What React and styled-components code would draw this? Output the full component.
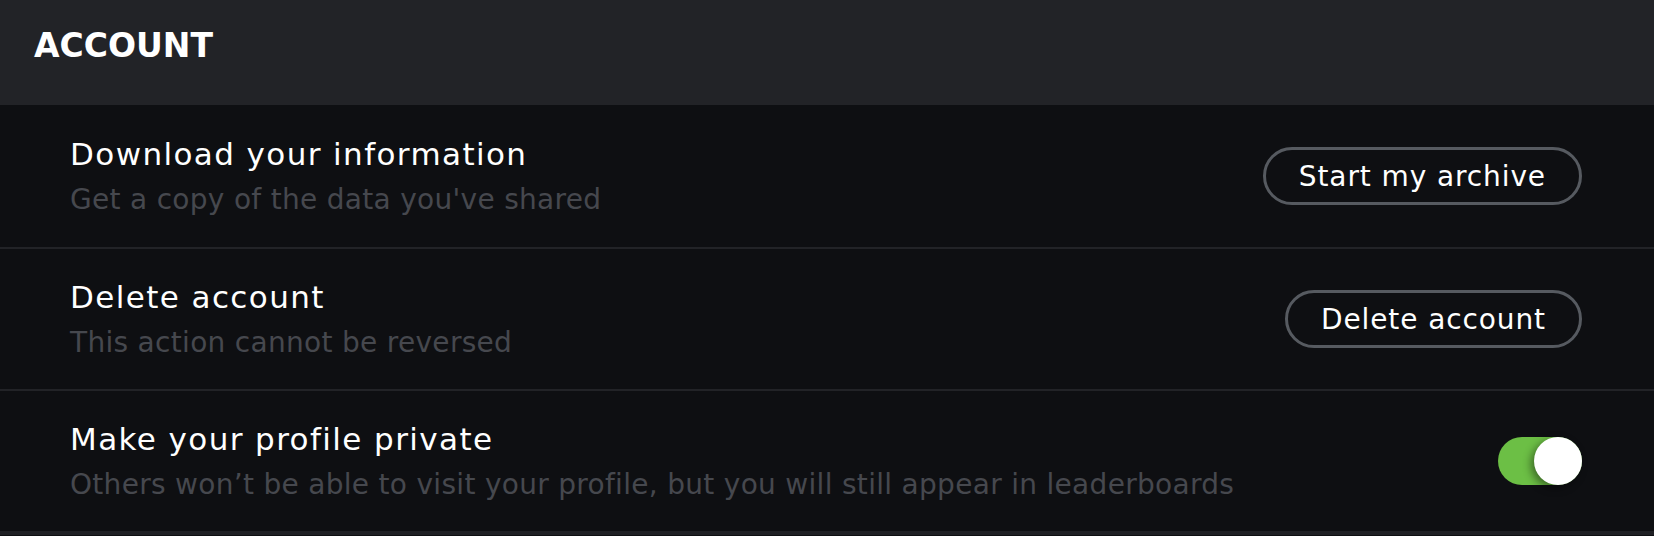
import React, { useState } from "react";
import styled, { createGlobalStyle } from "styled-components";

const rows = [
  {
    title: "Download your information",
    description: "Get a copy of the data you've shared",
    action: "Start my archive",
  },
  {
    title: "Delete account",
    description: "This action cannot be reversed",
    action: "Delete account",
  },
  {
    title: "Make your profile private",
    description:
      "Others won\u2019t be able to visit your profile, but you will still appear in leaderboards",
    toggle: true,
  },
];

const App = () => {
  const [isPrivate, setIsPrivate] = useState(true);

  return (
    <>
      <GlobalStyle />
      <Panel>
        <Header>
          <Heading>ACCOUNT</Heading>
        </Header>
        {rows.map((row, idx) => (
          <Row key={idx}>
            <Info>
              <RowTitle>{row.title}</RowTitle>
              <RowDescription>{row.description}</RowDescription>
            </Info>
            {row.toggle ? (
              <Toggle
                $on={isPrivate}
                onClick={() => setIsPrivate((v) => !v)}
                aria-pressed={isPrivate}
              >
                <Knob $on={isPrivate} />
              </Toggle>
            ) : (
              <OutlineButton>{row.action}</OutlineButton>
            )}
          </Row>
        ))}
      </Panel>
    </>
  );
};

export default App;

/* ================== STYLES ================== */

const GlobalStyle = createGlobalStyle`
  html, body {
    margin: 0;
    padding: 0;
    background: #0e0f12;
  }
  * {
    box-sizing: border-box;
  }
`;

const Panel = styled.div`
  width: 100%;
  background: #0e0f12;
  font-family: "DejaVu Sans", "Open Sans", sans-serif;
  color: #ffffff;
  border-bottom: 4px solid #1f2024;
`;

const Header = styled.div`
  height: 105px;
  background: #222327;
  display: flex;
  align-items: center;
  padding: 0 0 14px 34px;
`;

const Heading = styled.h2`
  margin: 0;
  font-size: 33px;
  font-weight: 700;
  color: #ffffff;
`;

const Row = styled.div`
  height: 142px;
  display: flex;
  align-items: center;
  justify-content: space-between;
  padding: 0 72px 0 70px;

  & + & {
    border-top: 2px solid #222327;
  }
`;

const Info = styled.div`
  display: flex;
  flex-direction: column;
  gap: 12px;
`;

const RowTitle = styled.div`
  font-size: 31px;
  line-height: 36px;
  font-weight: 400;
  letter-spacing: 1.4px;
  color: #ffffff;
`;

const RowDescription = styled.div`
  font-size: 28px;
  line-height: 32px;
  font-weight: 400;
  letter-spacing: 0.3px;
  color: #46484e;
`;

const OutlineButton = styled.button`
  height: 58px;
  padding: 0 33px;
  border: 3px solid #565a60;
  border-radius: 29px;
  background: transparent;
  color: #ffffff;
  font-family: inherit;
  font-size: 28px;
  letter-spacing: 0.9px;
  cursor: pointer;
`;

const Toggle = styled.button`
  position: relative;
  width: 84px;
  height: 48px;
  padding: 0;
  border: none;
  border-radius: 24px;
  background: ${({ $on }) => ($on ? "#6cbf45" : "#3a3c42")};
  cursor: pointer;
`;

const Knob = styled.span`
  position: absolute;
  top: 0;
  left: ${({ $on }) => ($on ? "36px" : "0")};
  width: 48px;
  height: 48px;
  border-radius: 50%;
  background: #ffffff;
  box-shadow: -3px 3px 8px rgba(0, 0, 0, 0.45);
`;
